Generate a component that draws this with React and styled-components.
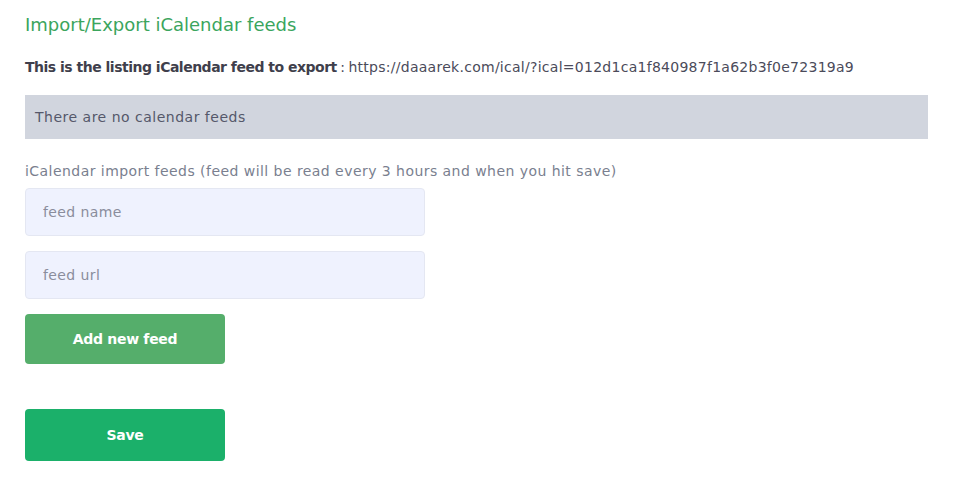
import styled, { createGlobalStyle } from 'styled-components'

const GlobalStyle = createGlobalStyle`
  body {
    margin: 0;
    background: #ffffff;
    font-family: 'DejaVu Sans', 'Liberation Sans', sans-serif;
  }
`

const Page = styled.div`
  padding: 12px 45px 28px 25px;
  display: flex;
  flex-direction: column;
`

const Title = styled.h2`
  margin: 0;
  font-size: 18px;
  font-weight: 400;
  color: #3ba55d;
  line-height: 26px;
`

const ExportLine = styled.p`
  margin: 16px 0 0;
  font-size: 14px;
  line-height: 26px;
  letter-spacing: 0.27px;
  color: #4b4b5a;
  b {
    font-weight: 600;
    letter-spacing: -0.5px;
    color: #3f3f4c;
  }
`

const Sep = styled.span`
  letter-spacing: -1px;
  margin-right: 1px;
`

const Notice = styled.div`
  margin-top: 15px;
  background: #d1d5de;
  height: 44px;
  padding: 0 10px;
  display: flex;
  align-items: center;
  font-size: 14px;
  letter-spacing: 0.5px;
  color: #55586a;
`

const Label = styled.div`
  margin-top: 21px;
  font-size: 14px;
  line-height: 22px;
  letter-spacing: 0.45px;
  color: #7a7f8f;
`

const Form = styled.div`
  margin-top: 6px;
  display: flex;
  flex-direction: column;
  gap: 15px;
  width: 400px;
`

const Input = styled.input`
  box-sizing: border-box;
  width: 100%;
  height: 48px;
  padding: 0 17px;
  border: 1px solid #e4e7f2;
  border-radius: 4px;
  background: #eff2fe;
  font-family: inherit;
  font-size: 14px;
  letter-spacing: 0.4px;
  color: #333;
  outline: none;
  &::placeholder {
    color: #8a8d9c;
  }
`

const Button = styled.button`
  width: 200px;
  height: ${(p) => (p.$tall ? '52px' : '50px')};
  border: none;
  border-radius: 4px;
  background: ${(p) => p.$color};
  color: #ffffff;
  font-family: inherit;
  font-size: 14px;
  font-weight: 600;
  letter-spacing: -0.3px;
  cursor: pointer;
`

const SaveRow = styled.div`
  margin-top: 45px;
`

const App = () => {
  return (
    <>
      <GlobalStyle />
      <Page>
        <Title>Import/Export iCalendar feeds</Title>
        <ExportLine>
          <b>This is the listing iCalendar feed to export</b>
          <Sep> : </Sep>
          https://daaarek.com/ical/?ical=012d1ca1f840987f1a62b3f0e72319a9
        </ExportLine>
        <Notice>There are no calendar feeds</Notice>
        <Label>
          iCalendar import feeds (feed will be read every 3 hours and when you hit save)
        </Label>
        <Form>
          <Input placeholder='feed name' />
          <Input placeholder='feed url' />
          <Button $color='#55ae6b'>Add new feed</Button>
        </Form>
        <SaveRow>
          <Button $color='#1bb06a' $tall>
            Save
          </Button>
        </SaveRow>
      </Page>
    </>
  )
}

export default App
